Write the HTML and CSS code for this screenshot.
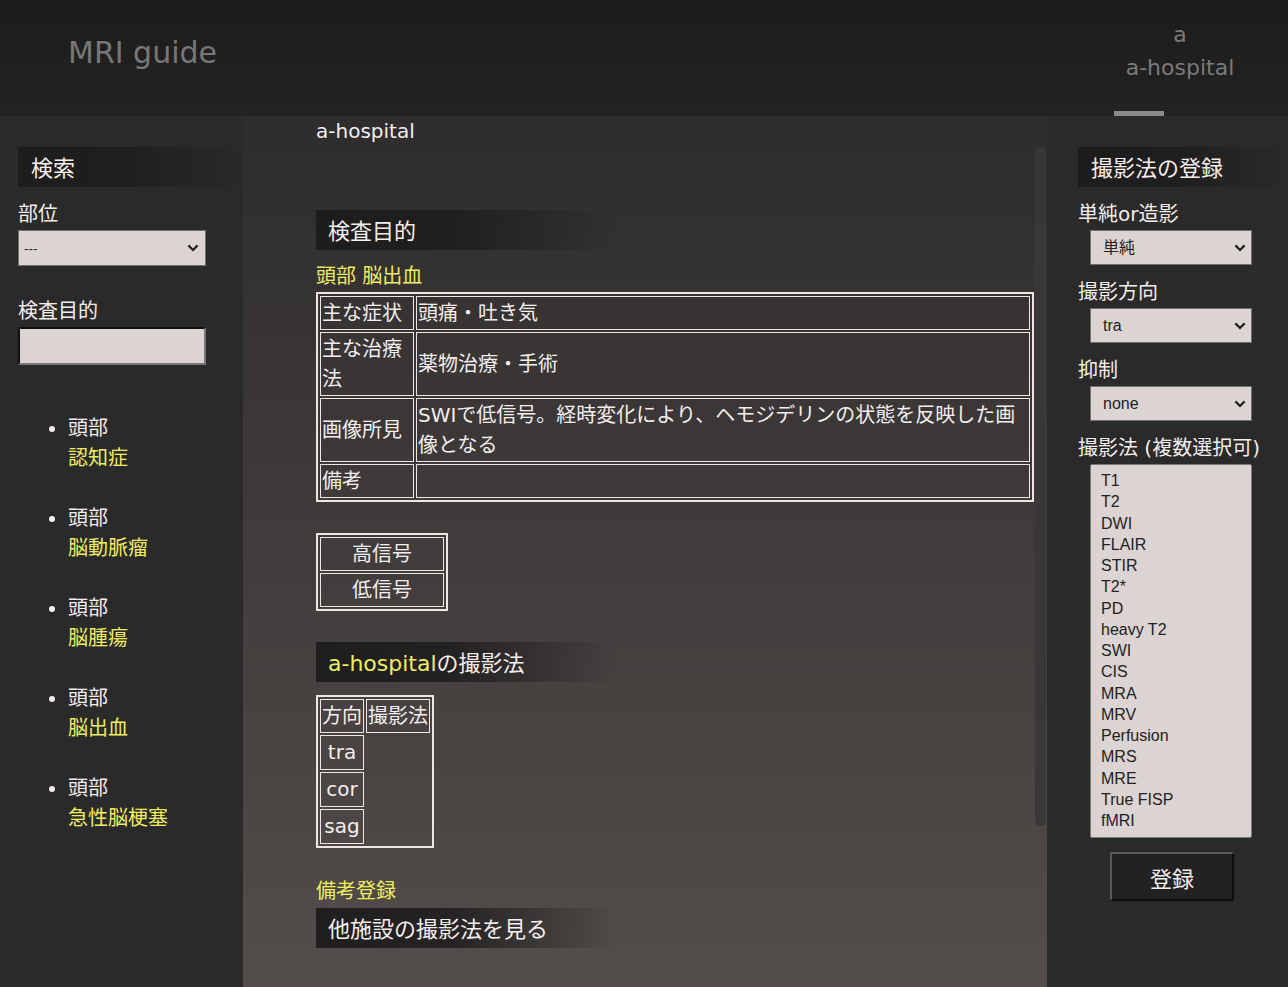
FILE: index.html
```html
<!DOCTYPE html>
<html lang="ja">
<head>
<meta charset="utf-8">
<title>MRI guide</title>
<link rel="stylesheet" href="styles.css">
</head>
<body>
<header class="topbar">
  <div class="brand">MRI guide</div>
  <nav class="hosp-nav">
    <div class="hosp-line">a</div>
    <div class="hosp-line">a-hospital</div>
    <div class="hosp-bar"></div>
  </nav>
</header>
<div class="layout">
  <aside class="side side-left">
    <h2 class="box-title">検索</h2>
    <label class="field-label">部位</label>
    <div class="select-wrap sel-left-wrap">
      <select class="sel sel-left"><option>---</option></select>
      <svg class="chev" width="12" height="8" viewBox="0 0 12 8" aria-hidden="true"><path d="M1.4 1.4 6 6l4.6-4.6" fill="none" stroke="#222" stroke-width="2.2"/></svg>
    </div>
    <label class="field-label label-gap">検査目的</label>
    <input class="text-input" type="text">
    <ul class="case-list">
      <li><span class="part">頭部</span><a class="case">認知症</a></li>
      <li><span class="part">頭部</span><a class="case">脳動脈瘤</a></li>
      <li><span class="part">頭部</span><a class="case">脳腫瘍</a></li>
      <li><span class="part">頭部</span><a class="case">脳出血</a></li>
      <li><span class="part">頭部</span><a class="case">急性脳梗塞</a></li>
    </ul>
  </aside>
  <main class="content">
    <div class="scroll-thumb"></div>
    <p class="hosp-name">a-hospital</p>
    <h2 class="box-title main-title first-title">検査目的</h2>
    <p class="yellow case-name">頭部 脳出血</p>
    <table class="grid info">
      <tr><td class="k">主な症状</td><td>頭痛・吐き気</td></tr>
      <tr><td class="k">主な治療法</td><td>薬物治療・手術</td></tr>
      <tr><td class="k">画像所見</td><td>SWIで低信号。経時変化により、ヘモジデリンの状態を反映した画像となる</td></tr>
      <tr><td class="k">備考</td><td></td></tr>
    </table>
    <table class="grid signal">
      <tr><td>高信号</td></tr>
      <tr><td>低信号</td></tr>
    </table>
    <h2 class="box-title main-title method-title"><span class="yellow">a-hospital</span>の撮影法</h2>
    <table class="grid dir">
      <tr><td>方向</td><td>撮影法</td></tr>
      <tr class="dir-row"><td>tra</td></tr>
      <tr class="dir-row"><td>cor</td></tr>
      <tr class="dir-row"><td>sag</td></tr>
    </table>
    <p class="yellow note-link">備考登録</p>
    <h2 class="box-title main-title other-title">他施設の撮影法を見る</h2>
  </main>
  <aside class="side side-right">
    <h2 class="box-title">撮影法の登録</h2>
    <label class="field-label">単純or造影</label>
    <div class="select-wrap sel-right-wrap">
      <select class="sel sel-right"><option>単純</option></select>
      <svg class="chev" width="12" height="8" viewBox="0 0 12 8" aria-hidden="true"><path d="M1.4 1.4 6 6l4.6-4.6" fill="none" stroke="#222" stroke-width="2.2"/></svg>
    </div>
    <label class="field-label">撮影方向</label>
    <div class="select-wrap sel-right-wrap">
      <select class="sel sel-right"><option>tra</option></select>
      <svg class="chev" width="12" height="8" viewBox="0 0 12 8" aria-hidden="true"><path d="M1.4 1.4 6 6l4.6-4.6" fill="none" stroke="#222" stroke-width="2.2"/></svg>
    </div>
    <label class="field-label">抑制</label>
    <div class="select-wrap sel-right-wrap">
      <select class="sel sel-right"><option>none</option></select>
      <svg class="chev" width="12" height="8" viewBox="0 0 12 8" aria-hidden="true"><path d="M1.4 1.4 6 6l4.6-4.6" fill="none" stroke="#222" stroke-width="2.2"/></svg>
    </div>
    <label class="field-label">撮影法 (複数選択可)</label>
    <div class="listbox" role="listbox">
      <div class="opt">T1</div>
      <div class="opt">T2</div>
      <div class="opt">DWI</div>
      <div class="opt">FLAIR</div>
      <div class="opt">STIR</div>
      <div class="opt">T2*</div>
      <div class="opt">PD</div>
      <div class="opt">heavy T2</div>
      <div class="opt">SWI</div>
      <div class="opt">CIS</div>
      <div class="opt">MRA</div>
      <div class="opt">MRV</div>
      <div class="opt">Perfusion</div>
      <div class="opt">MRS</div>
      <div class="opt">MRE</div>
      <div class="opt">True FISP</div>
      <div class="opt">fMRI</div>
    </div>
    <button class="submit" type="button">登録</button>
  </aside>
</div>
</body>
</html>
```

FILE: styles.css
```css
* { box-sizing: border-box; }
html, body { margin: 0; padding: 0; }
body {
  width: 1288px;
  height: 987px;
  overflow: hidden;
  background: #2b2a2a;
  font-family: "DejaVu Sans", "Noto Sans CJK JP", sans-serif;
  font-size: 20px;
  line-height: 30px;
  color: #f4eeee;
}

/* header */
.topbar {
  height: 116px;
  display: flex;
  justify-content: space-between;
  background: linear-gradient(#1c1c1c, #232323);
  padding: 0 42px 0 68px;
}
.brand {
  font-size: 30px;
  line-height: 34px;
  padding-top: 36px;
  color: #777777;
}
.hosp-nav {
  width: 132px;
  display: flex;
  flex-direction: column;
  padding-top: 18px;
  color: #7a7a7a;
  font-size: 22px;
  line-height: 33px;
  text-align: center;
}
.hosp-bar {
  width: 50px;
  height: 5px;
  background: #8a8a8a;
  margin-top: auto;
}

/* layout */
.layout {
  display: flex;
  height: 871px;
}
.side {
  background: #2b2a2a;
  padding-top: 31px;
}
.side-left {
  width: 243px;
  padding-left: 18px;
}
.side-right {
  width: 241px;
  padding-left: 31px;
}
.content {
  flex: 1;
  position: relative;
  background: linear-gradient(#2e2c2c, #534d4b);
  padding: 0 13px 0 73px;
}
.scroll-thumb {
  position: absolute;
  top: 31px;
  right: 1px;
  width: 11px;
  height: 679px;
  border-radius: 6px;
  background: #393737;
}

/* titles */
.box-title {
  margin: 0;
  height: 40px;
  line-height: 36px;
  padding-top: 4px;
  font-size: 22px;
  font-weight: normal;
  padding-left: 13px;
  background: linear-gradient(90deg, rgba(29,28,28,0.95) 0%, rgba(29,28,28,0.85) 45%, rgba(29,28,28,0) 100%);
  color: #f4eeee;
}
.main-title {
  width: 300px;
  padding-left: 12px;
}
.first-title { margin-top: 64px; }
.method-title { margin-top: 31px; }
.other-title { margin-top: 2px; }

.yellow { color: #eeee62; }

/* forms */
.field-label {
  display: block;
  margin-top: 11px;
  line-height: 30px;
  padding-top: 1px;
  height: 30px;
}
.label-gap { margin-top: 29px; }
.select-wrap {
  position: relative;
  margin-top: 2px;
}
.sel {
  display: block;
  -webkit-appearance: none;
  appearance: none;
  background-color: #dcd3d3;
  border: 1px solid #6e6e6e;
  border-radius: 0;
  color: #222;
  margin: 0;
}
.chev {
  position: absolute;
  top: 50%;
  margin-top: -4px;
  pointer-events: none;
}
.sel-left-wrap { width: 188px; }
.sel-left-wrap .chev { right: 7px; }
.sel-left {
  width: 188px;
  height: 36px;
  font-family: "Liberation Sans", Arial, sans-serif;
  font-size: 13.33px;
  padding-left: 5px;
}
.sel-right-wrap {
  width: 162px;
  margin-left: 12px;
}
.sel-right-wrap .chev { right: 6px; }
.sel-right {
  width: 162px;
  height: 35px;
  font-family: "Liberation Sans", "Noto Sans CJK JP", sans-serif;
  font-size: 16px;
  padding-left: 12px;
}
.text-input {
  display: block;
  width: 188px;
  height: 38px;
  margin-top: 2px;
  background: #dcd3d3;
  border-width: 2px;
  border-style: solid;
  border-color: #111 #777 #777 #111;
}
.listbox {
  width: 162px;
  height: 374px;
  margin: 2px 0 0 12px;
  border: 1px solid #7a7a7a;
  border-radius: 2px;
  background: #dcd3d3;
  padding: 5px 0 0 10px;
  font-family: "Liberation Sans", Arial, sans-serif;
  font-size: 16px;
  line-height: 21.25px;
  color: #222;
}
.submit {
  display: block;
  width: 124px;
  height: 49px;
  margin: 14px 0 0 32px;
  background: #222222;
  border-width: 2px;
  border-style: solid;
  border-color: #5a5a5a #0e0e0e #0e0e0e #5a5a5a;
  border-radius: 2px;
  color: #f4eeee;
  font-family: "DejaVu Sans", "Noto Sans CJK JP", sans-serif;
  font-size: 22px;
}

/* left list */
.case-list {
  margin: 48px 0 0;
  padding-left: 50px;
  list-style: disc;
}
.case-list li { margin-bottom: 30px; }
.case-list .part,
.case-list .case { display: block; }
.case { color: #eeee62; text-decoration: none; }

/* main */
.hosp-name { margin: 0; }
.case-name { margin: 11px 0 0; height: 29px; }
.note-link { margin: 28px 0 0; }

.grid {
  border-collapse: separate;
  border-spacing: 2px;
  border: 2px solid #efe5e5;
}
.grid td {
  box-sizing: content-box;
  border: 1px solid #efe5e5;
  padding: 1px;
  vertical-align: middle;
}
.info {
  width: 100%;
  margin-top: 2px;
}
.info td.k { width: 90px; }
.signal {
  width: 132px;
  margin-top: 31px;
  text-align: center;
}
.dir {
  margin-top: 13px;
  text-align: center;
}
.dir .dir-row td { padding-bottom: 2px; }
```
